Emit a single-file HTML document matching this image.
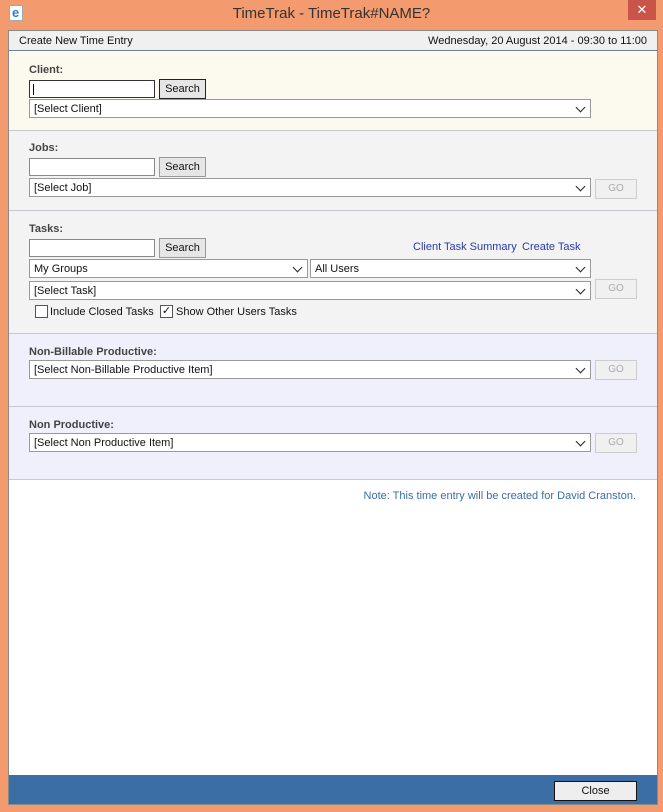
<!DOCTYPE html>
<html><head><style>
*{box-sizing:border-box;margin:0;padding:0}
body{width:663px;height:812px;background:#f39a6e;font-family:"Liberation Sans",sans-serif;font-size:11px;color:#111;position:relative;overflow:hidden}
.a{position:absolute}
.title{left:0;top:0;width:663px;height:30px;text-align:center;line-height:27px;font-size:15px;color:#333}
.x{left:628px;top:0;width:28px;height:20px;background:#c9544a;color:#fff;text-align:center;line-height:19px;font-size:13px}
.win{left:8px;top:30px;width:650px;height:775px;background:#fff;border:1px solid #8a8a8a}
.hdr{left:0;top:0;width:648px;height:20px;background:#f0f0f0;border-bottom:1px solid #6d7f99;line-height:20px;padding:0 10px}
.sec{left:0;width:648px;border-bottom:1px solid #c8c8d0}
.lbl{font-weight:bold;color:#444}
.inp{width:126px;height:18px;border:1px solid #888;background:#fff}
.btn{width:47px;height:20px;border:1px solid #999;background:#e6e6e6;text-align:center;line-height:18px}
.sel{height:19px;border:1px solid #999;background:#fff;padding-left:4px;line-height:18px}
.sel:after{content:"";position:absolute;right:6px;top:4px;width:6px;height:6px;border-right:1.5px solid #222;border-bottom:1.5px solid #222;transform:rotate(45deg)}
.go{width:42px;height:20px;border:1px solid #ccc;background:#f0f0f0;color:#aaa;text-align:center;line-height:18px;font-size:10px}
.cb{width:13px;height:13px;border:1px solid #555;background:#fff;font-size:11px;line-height:11px;text-align:center}
.lnk{color:#2a3aa8}
.foot{left:0;top:744px;width:648px;height:29px;background:#3c6ea6}
</style></head><body>
<div class="a" style="left:9px;top:5px;width:14px;height:16px;background:#fff;border:1px solid #9ab"><span style="color:#2a7fd0;font-weight:bold;font-size:13px;position:absolute;left:2px;top:-1px">e</span></div>
<div class="a title">TimeTrak - TimeTrak#NAME?</div>
<div class="a x">✕</div>
<div class="a win">
<div class="a hdr"><span>Create New Time Entry</span><span style="float:right">Wednesday, 20 August 2014 - 09:30 to 11:00</span></div>
<div class="a sec" style="top:21px;height:79px;background:#fcfaee"></div>
<div class="a sec" style="top:100px;height:80px;background:#f3f3f3"></div>
<div class="a sec" style="top:180px;height:123px;background:#f3f3f3"></div>
<div class="a sec" style="top:303px;height:73px;background:#f0f0fc"></div>
<div class="a sec" style="top:376px;height:73px;background:#f0f0fc"></div>

<div class="a lbl" style="left:20px;top:33px">Client:</div>
<div class="a inp" style="left:20px;top:49px;border-color:#333"><div style="position:absolute;left:3px;top:3px;width:1px;height:11px;background:#000"></div></div>
<div class="a btn" style="left:150px;top:48px;border:1px solid #222">Search</div>
<div class="a sel" style="left:20px;top:68px;width:562px">[Select Client]</div>

<div class="a lbl" style="left:20px;top:111px">Jobs:</div>
<div class="a inp" style="left:20px;top:127px"></div>
<div class="a btn" style="left:150px;top:126px">Search</div>
<div class="a sel" style="left:20px;top:147px;width:562px">[Select Job]</div>
<div class="a go" style="left:586px;top:148px">GO</div>

<div class="a lbl" style="left:20px;top:192px">Tasks:</div>
<div class="a inp" style="left:20px;top:208px"></div>
<div class="a btn" style="left:150px;top:207px">Search</div>
<div class="a lnk" style="left:404px;top:210px">Client Task Summary</div>
<div class="a lnk" style="left:513px;top:210px">Create Task</div>
<div class="a sel" style="left:20px;top:228px;width:279px">My Groups</div>
<div class="a sel" style="left:301px;top:228px;width:281px">All Users</div>
<div class="a sel" style="left:20px;top:250px;width:562px">[Select Task]</div>
<div class="a go" style="left:586px;top:248px">GO</div>
<div class="a cb" style="left:26px;top:274px"></div>
<div class="a" style="left:41px;top:275px">Include Closed Tasks</div>
<div class="a cb" style="left:151px;top:274px">✓</div>
<div class="a" style="left:167px;top:275px">Show Other Users Tasks</div>

<div class="a lbl" style="left:20px;top:315px">Non-Billable Productive:</div>
<div class="a sel" style="left:20px;top:329px;width:562px">[Select Non-Billable Productive Item]</div>
<div class="a go" style="left:586px;top:329px">GO</div>

<div class="a lbl" style="left:20px;top:388px">Non Productive:</div>
<div class="a sel" style="left:20px;top:402px;width:562px">[Select Non Productive Item]</div>
<div class="a go" style="left:586px;top:402px">GO</div>

<div class="a" style="right:21px;top:459px;color:#3a6ea8">Note: This time entry will be created for David Cranston.</div>
<div class="a foot"><div class="a btn" style="left:545px;top:6px;width:83px;height:20px;border:1px solid #111;background:#eee">Close</div></div>
</div>
</body></html>
